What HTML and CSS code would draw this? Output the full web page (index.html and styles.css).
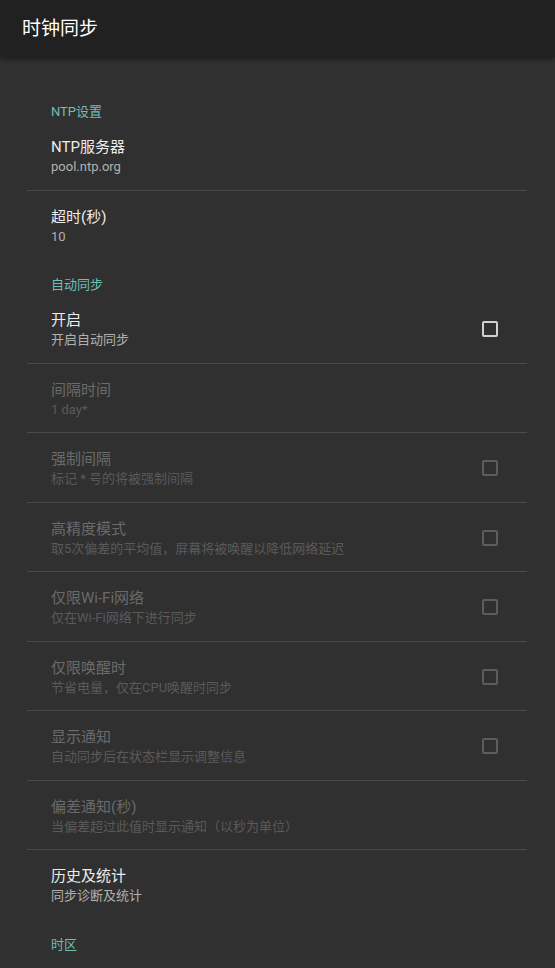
FILE: index.html
```html
<!DOCTYPE html>
<html lang="zh-CN">
<head>
<meta charset="utf-8">
<title>时钟同步</title>
<link rel="stylesheet" href="styles.css">
</head>
<body>
<header class="appbar"><h1 class="appbar-title">时钟同步</h1></header>
<main class="list">
  <section class="category">
    <div class="cat-title">NTP设置</div>
    <div class="pref">
      <div class="pref-text"><div class="pref-title">NTP服务器</div><div class="pref-summary">pool.ntp.org</div></div>
    </div>
    <div class="divider"></div>
    <div class="pref">
      <div class="pref-text"><div class="pref-title">超时(秒)</div><div class="pref-summary">10</div></div>
    </div>
  </section>
  <section class="category">
    <div class="cat-title">自动同步</div>
    <div class="pref">
      <div class="pref-text"><div class="pref-title">开启</div><div class="pref-summary">开启自动同步</div></div>
      <span class="checkbox"></span>
    </div>
    <div class="divider"></div>
    <div class="pref disabled">
      <div class="pref-text"><div class="pref-title">间隔时间</div><div class="pref-summary">1 day*</div></div>
    </div>
    <div class="divider"></div>
    <div class="pref disabled">
      <div class="pref-text"><div class="pref-title">强制间隔</div><div class="pref-summary">标记 * 号的将被强制间隔</div></div>
      <span class="checkbox"></span>
    </div>
    <div class="divider"></div>
    <div class="pref disabled">
      <div class="pref-text"><div class="pref-title">高精度模式</div><div class="pref-summary">取5次偏差的平均值，屏幕将被唤醒以降低网络延迟</div></div>
      <span class="checkbox"></span>
    </div>
    <div class="divider"></div>
    <div class="pref disabled">
      <div class="pref-text"><div class="pref-title">仅限Wi-Fi网络</div><div class="pref-summary">仅在Wi-Fi网络下进行同步</div></div>
      <span class="checkbox"></span>
    </div>
    <div class="divider"></div>
    <div class="pref disabled">
      <div class="pref-text"><div class="pref-title">仅限唤醒时</div><div class="pref-summary">节省电量，仅在CPU唤醒时同步</div></div>
      <span class="checkbox"></span>
    </div>
    <div class="divider"></div>
    <div class="pref disabled">
      <div class="pref-text"><div class="pref-title">显示通知</div><div class="pref-summary">自动同步后在状态栏显示调整信息</div></div>
      <span class="checkbox"></span>
    </div>
    <div class="divider"></div>
    <div class="pref disabled">
      <div class="pref-text"><div class="pref-title">偏差通知(秒)</div><div class="pref-summary">当偏差超过此值时显示通知（以秒为单位）</div></div>
    </div>
    <div class="divider"></div>
    <div class="pref">
      <div class="pref-text"><div class="pref-title">历史及统计</div><div class="pref-summary">同步诊断及统计</div></div>
    </div>
  </section>
  <section class="category">
    <div class="cat-title">时区</div>
  </section>
</main>
</body>
</html>
```
FILE: styles.css
```css
html, body {
  margin: 0;
  padding: 0;
  background: #303030;
  height: 100%;
  overflow: hidden;
}
body {
  font-family: Roboto, "Noto Sans CJK SC", sans-serif;
  color: #ffffff;
}
.appbar {
  height: 57px;
  background: #212121;
  display: flex;
  align-items: center;
  padding-left: 22px;
  box-shadow: 0 2px 5px rgba(0, 0, 0, 0.45);
  position: relative;
  z-index: 1;
}
.appbar-title {
  margin: 0;
  font-size: 19px;
  font-weight: 400;
  color: #ffffff;
  line-height: 24px;
}
.list {
  padding: 29px 28px 0 27px;
}
.cat-title {
  padding: 17px 0 0 24px;
  line-height: 18px;
  font-size: 13px;
  font-weight: 400;
  color: #6fbfb3;
}
.pref {
  display: flex;
  align-items: center;
  height: 68.5px;
  box-sizing: border-box;
  padding: 16px 29px 12.5px 24px;
}
.pref-text {
  flex: 1;
  min-width: 0;
}
.pref-title {
  font-size: 15px;
  line-height: 20px;
  color: #ececec;
}
.pref-summary {
  font-size: 13px;
  line-height: 20px;
  color: #b0b0b0;
}
.pref.disabled .pref-title {
  color: #6a6a6a;
}
.pref.disabled .pref-summary {
  color: #5a5a5a;
}
.checkbox {
  width: 16px;
  height: 16px;
  box-sizing: border-box;
  border: 2px solid #d0d0d0;
  border-radius: 2px;
  margin-top: -2px;
}
.pref.disabled .checkbox {
  border-color: #5c5c5c;
}
.divider {
  height: 1px;
  background: #4a4a4a;
}
```
